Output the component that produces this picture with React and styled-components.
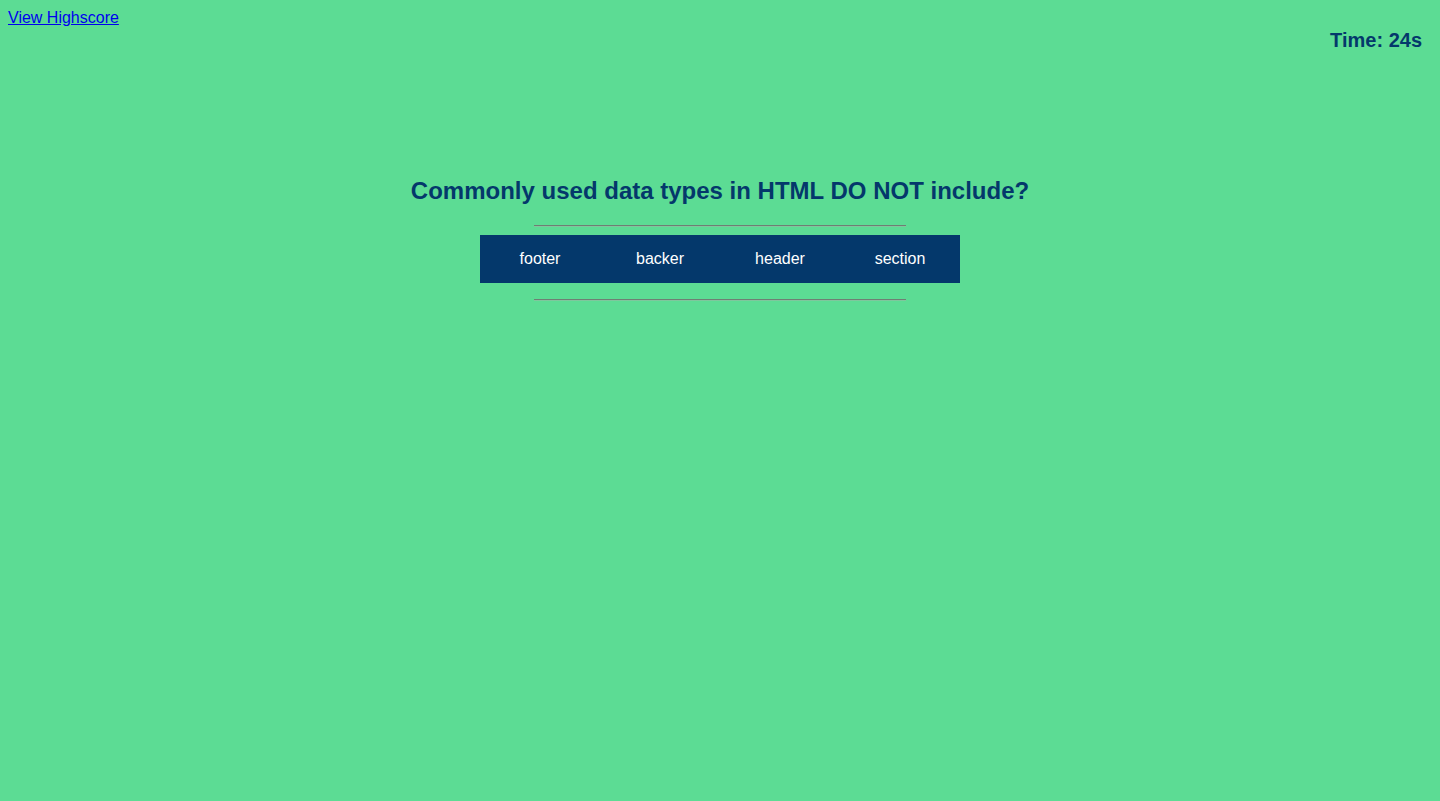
import React from 'react';
import styled, { createGlobalStyle } from 'styled-components';

const GlobalStyle = createGlobalStyle`
  html, body {
    background: #5cdc94;
  }
  body {
    margin: 8px;
    font-family: "Liberation Sans", Arial, sans-serif;
    min-height: 785px;
  }
`;

const TopBar = styled.header`
  display: flex;
  justify-content: space-between;
  align-items: flex-start;
  padding-top: 1px;
`;

const HighscoreLink = styled.a`
  color: #0000ee;
  font-size: 16px;
  line-height: 18px;
  text-decoration: underline;
`;

const Timer = styled.div`
  color: #04386b;
  font-size: 20px;
  font-weight: bold;
  margin-top: 20px;
  margin-right: 10px;
  line-height: 23px;
`;

const Quiz = styled.main`
  display: flex;
  flex-direction: column;
  align-items: center;
  margin-top: 125px;
`;

const Question = styled.h2`
  color: #04386b;
  font-size: 24px;
  font-weight: bold;
  margin: 0;
  line-height: 28px;
`;

const Rule = styled.hr`
  width: 372px;
  margin: ${(p) => p.$gap};
  border: none;
  border-top: 1px solid #6f7f74;
  border-bottom: 1px solid #7fc79d;
  height: 0;
`;

const Choices = styled.div`
  display: grid;
  grid-template-columns: repeat(4, 120px);
  background: #04386b;
`;

const Choice = styled.button`
  height: 48px;
  background: transparent;
  border: none;
  color: #fff;
  font-family: "Liberation Sans", Arial, sans-serif;
  font-size: 16px;
  cursor: pointer;
`;

const answers = ['footer', 'backer', 'header', 'section'];

export default function App() {
  return (
    <>
      <GlobalStyle />
      <TopBar>
        <HighscoreLink href="#">View Highscore</HighscoreLink>
        <Timer>Time: 24s</Timer>
      </TopBar>
      <Quiz>
        <Question>Commonly used data types in HTML DO NOT include?</Question>
        <Rule $gap="20px 0 8px" />
        <Choices>
          {answers.map((a) => (
            <Choice key={a}>{a}</Choice>
          ))}
        </Choices>
        <Rule $gap="16px 0 0" />
      </Quiz>
    </>
  );
}
